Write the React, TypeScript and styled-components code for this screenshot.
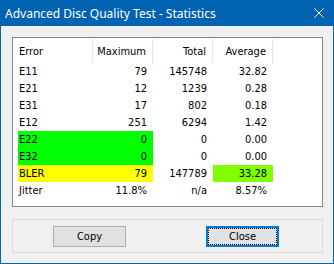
import styled, { createGlobalStyle } from "styled-components";

const GlobalStyle = createGlobalStyle`
  body {
    margin: 0;
    background: #f0f0f0;
  }
`;

const Window = styled.div`
  width: 334px;
  height: 264px;
  box-sizing: border-box;
  border: 1px solid #0063b1;
  border-top: 0;
  background: #f0f0f0;
  display: flex;
  flex-direction: column;
  font-family: "DejaVu Sans Condensed", "Liberation Sans", sans-serif;
  font-size: 11px;
  color: #000;
`;

const TitleBar = styled.div`
  height: 26px;
  margin: 0 -1px;
  padding: 0 10px 0 5px;
  background: #0063b1;
  color: #fff;
  display: flex;
  align-items: center;
  justify-content: space-between;
  font-family: "Noto Sans", "Open Sans", sans-serif;
  font-size: 12px;
`;

const CloseGlyph = styled.svg`
  width: 10px;
  height: 10px;
  display: block;
`;

const Client = styled.div`
  flex: 1;
  padding: 11px 10px 0 11px;
  display: flex;
  flex-direction: column;
  gap: 12px;
`;

const ListBox = styled.div`
  height: 170px;
  box-sizing: border-box;
  border: 1px solid #828790;
  background: #fff;
`;

const HeaderRow = styled.div`
  display: grid;
  grid-template-columns: 80px 60px 60px 60px;
  height: 25px;
`;

const HeaderCell = styled.div<{ $left?: boolean }>`
  display: flex;
  align-items: center;
  justify-content: ${(p) => (p.$left ? "flex-start" : "flex-end")};
  padding: ${(p) => (p.$left ? "0 0 0 6px" : "0 6px 0 0")};
  border-right: 1px solid #e5e5e5;
  margin-top: 1px;
`;

const Row = styled.div`
  display: grid;
  grid-template-columns: 75px 60px 60px 60px;
  margin-left: 5px;
  height: 17px;
`;

const Cell = styled.div<{ $left?: boolean; $bg?: string }>`
  display: flex;
  align-items: center;
  justify-content: ${(p) => (p.$left ? "flex-start" : "flex-end")};
  padding: ${(p) => (p.$left ? "0 0 0 1px" : "0 6px 0 0")};
  background: ${(p) => p.$bg ?? "transparent"};
  white-space: nowrap;
`;

const GroupBox = styled.div`
  height: 34px;
  box-sizing: border-box;
  border: 1px solid #dcdcdc;
  display: flex;
  align-items: center;
  padding-left: 40px;
  gap: 80px;
`;

const Button = styled.button<{ $focused?: boolean }>`
  width: 73px;
  height: 21px;
  box-sizing: border-box;
  margin: 0;
  padding: 0;
  font: inherit;
  color: #000;
  background: #e1e1e1;
  border: ${(p) => (p.$focused ? "2px solid #0078d7" : "1px solid #adadad")};
  display: flex;
  align-items: center;
  justify-content: center;
`;

const FocusRing = styled.span`
  width: 100%;
  height: 100%;
  box-sizing: border-box;
  border: 1px dotted #000;
  display: flex;
  align-items: center;
  justify-content: center;
`;

type Stat = {
  name: string;
  max: string;
  total: string;
  avg: string;
  rowBg?: string;
  avgBg?: string;
};

const stats: Stat[] = [
  { name: "E11", max: "79", total: "145748", avg: "32.82" },
  { name: "E21", max: "12", total: "1239", avg: "0.28" },
  { name: "E31", max: "17", total: "802", avg: "0.18" },
  { name: "E12", max: "251", total: "6294", avg: "1.42" },
  { name: "E22", max: "0", total: "0", avg: "0.00", rowBg: "#00ff00" },
  { name: "E32", max: "0", total: "0", avg: "0.00", rowBg: "#00ff00" },
  { name: "BLER", max: "79", total: "147789", avg: "33.28", rowBg: "#ffff00", avgBg: "#80ff00" },
  { name: "Jitter", max: "11.8%", total: "n/a", avg: "8.57%" },
];

const App = () => {
  return (
    <>
      <GlobalStyle />
      <Window>
        <TitleBar>
          <span>Advanced Disc Quality Test - Statistics</span>
          <CloseGlyph viewBox="0 0 10 10">
            <path d="M0.5 0.5 L9.5 9.5 M9.5 0.5 L0.5 9.5" stroke="#fff" strokeWidth="1" fill="none" />
          </CloseGlyph>
        </TitleBar>
        <Client>
          <ListBox>
            <HeaderRow>
              <HeaderCell $left>Error</HeaderCell>
              <HeaderCell>Maximum</HeaderCell>
              <HeaderCell>Total</HeaderCell>
              <HeaderCell>Average</HeaderCell>
            </HeaderRow>
            {stats.map((s) => (
              <Row key={s.name}>
                <Cell $left $bg={s.rowBg}>{s.name}</Cell>
                <Cell $bg={s.rowBg}>{s.max}</Cell>
                <Cell>{s.total}</Cell>
                <Cell $bg={s.avgBg}>{s.avg}</Cell>
              </Row>
            ))}
          </ListBox>
          <GroupBox>
            <Button>Copy</Button>
            <Button $focused>
              <FocusRing>Close</FocusRing>
            </Button>
          </GroupBox>
        </Client>
      </Window>
    </>
  );
};

export default App;
